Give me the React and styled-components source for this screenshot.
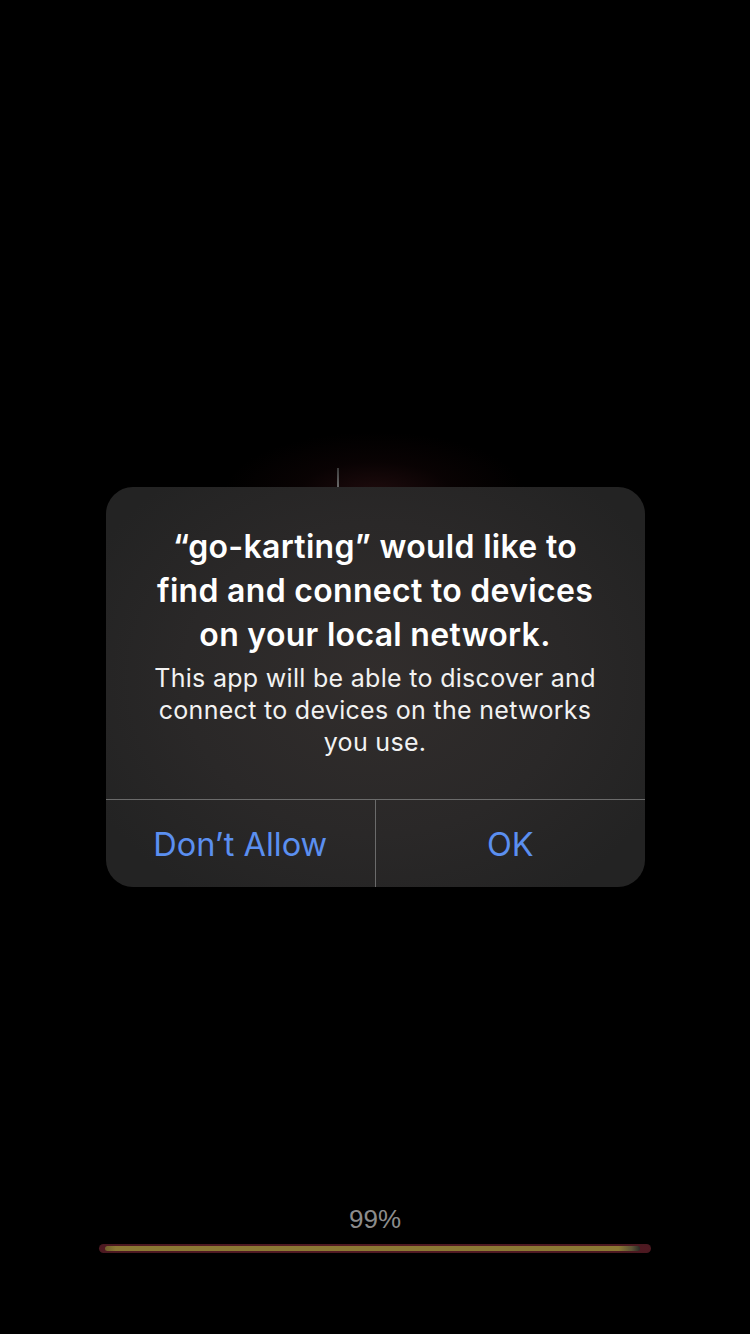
import React from "react";
import styled, { createGlobalStyle } from "styled-components";

const GlobalStyle = createGlobalStyle`
  html, body {
    margin: 0;
    padding: 0;
    background: #000;
  }
  * {
    box-sizing: border-box;
  }
`;

const Page = styled.div`
  width: 750px;
  height: 1334px;
  display: flex;
  flex-direction: column;
  background: #000;
  overflow: hidden;
`;

const Stage = styled.div`
  flex: 1;
  display: flex;
  flex-direction: column;
  align-items: center;
  padding-top: 468px;
  background: radial-gradient(
    ellipse 150px 60px at 375px 492px,
    rgba(60, 22, 25, 0.5) 0%,
    rgba(35, 10, 12, 0.25) 50%,
    rgba(0, 0, 0, 0) 100%
  );
`;

const Needle = styled.div`
  width: 2px;
  height: 19px;
  margin-left: -74px;
  background: linear-gradient(#3a3a3a, #6a6a6a);
`;

const Alert = styled.div`
  width: 539px;
  border-radius: 27px;
  overflow: hidden;
  background: radial-gradient(
    ellipse 320px 260px at 50% 48%,
    #312d2c 0%,
    #2a2828 60%,
    #232323 100%
  );
  display: flex;
  flex-direction: column;
`;

const AlertBody = styled.div`
  padding: 38px 20px 41px;
  display: flex;
  flex-direction: column;
  align-items: center;
  gap: 5px;
  text-align: center;
  color: #fff;
  font-family: Inter, "Noto Sans", sans-serif;
`;

const Title = styled.h1`
  margin: 0;
  font-size: 32px;
  line-height: 44px;
  font-weight: 600;
  letter-spacing: 0.3px;
`;

const Message = styled.p`
  margin: 0;
  font-size: 25px;
  line-height: 32px;
  font-weight: 400;
  letter-spacing: 0.3px;
  color: #f2f2f2;
`;

const Actions = styled.div`
  display: grid;
  grid-template-columns: 1fr 1fr;
  border-top: 1px solid #6b6b6b;
  height: 88px;
`;

const Action = styled.button`
  appearance: none;
  border: none;
  background: transparent;
  margin: 0;
  padding: 2px 0 0;
  font-family: Inter, "Noto Sans", sans-serif;
  font-size: 32.5px;
  font-weight: 400;
  color: #5b8ff0;
  border-left: ${(p) => (p.$divider ? "1px solid #6b6b6b" : "none")};
  cursor: pointer;
`;

const Loader = styled.div`
  display: flex;
  flex-direction: column;
  align-items: center;
  gap: 11px;
  padding-bottom: 81px;
`;

const Percent = styled.div`
  font-family: "Liberation Sans", Arial, sans-serif;
  font-size: 26px;
  line-height: 28px;
  color: #8c8c8c;
`;

const Track = styled.div`
  width: 552px;
  height: 9px;
  border-radius: 5px;
  background: radial-gradient(ellipse at center, #5a1c25 0%, #4a1820 100%);
  display: flex;
  align-items: center;
  padding: 0 6px;
`;

const Fill = styled.div`
  height: 5px;
  border-radius: 3px;
  background: linear-gradient(
    90deg,
    #6f5f2c 0%,
    #8b7834 2%,
    #8b7834 96%,
    #5c5336 98.5%,
    #2a2a26 100%
  );
`;

export default function App() {
  const progress = 99;
  return (
    <>
      <GlobalStyle />
      <Page>
        <Stage>
          <Needle />
          <Alert>
            <AlertBody>
              <Title>
                “go-karting” would like to
                <br />
                find and connect to devices
                <br />
                on your local network.
              </Title>
              <Message>
                This app will be able to discover and
                <br />
                connect to devices on the networks
                <br />
                you use.
              </Message>
            </AlertBody>
            <Actions>
              <Action>Don’t Allow</Action>
              <Action $divider>OK</Action>
            </Actions>
          </Alert>
        </Stage>
        <Loader>
          <Percent>{progress}%</Percent>
          <Track>
            <Fill style={{ width: `${progress}%` }} />
          </Track>
        </Loader>
      </Page>
    </>
  );
}
